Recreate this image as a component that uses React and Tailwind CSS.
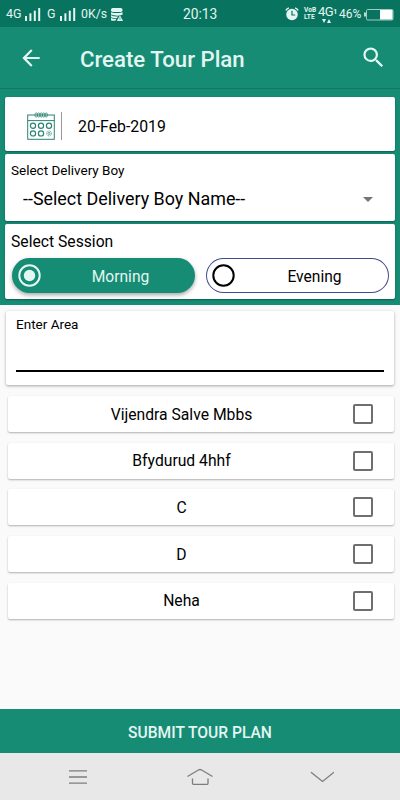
import { useState } from "react";
import { MdArrowBack, MdSearch, MdArrowDropDown } from "react-icons/md";

const areas = ["Vijendra Salve Mbbs", "Bfydurud 4hhf", "C", "D", "Neha"];

const Signal = () => (
  <svg className="w-4 h-[13px] shrink-0" viewBox="0 0 16 13" fill="currentColor">
    <rect x="0" y="8" width="2" height="5" />
    <rect x="4.4" y="5.3" width="2" height="7.7" />
    <rect x="8.8" y="2.7" width="2" height="10.3" />
    <rect x="13.2" y="0" width="2" height="13" />
  </svg>
);

const DataIcon = () => (
  <svg className="w-3 h-[13px] shrink-0" viewBox="0 0 12 13" fill="currentColor">
    <rect x="0" y="0" width="11.5" height="4" rx="1.8" />
    <path d="M0 4.2Q5 6 11.5 4.2V6.8L8 7.6Q3 7.8 0 6.6z" />
    <path d="M0 7.2Q3 8.6 7 8.4L5.8 10.2Q2 10.2 0 9.2z" />
    <path d="M0 10Q2 11 5.2 11L4.4 12.8H1Q0 12.6 0 12z" />
    <path d="M9 7.2L12 13H5.8z" />
    <path d="M9 9.2v2.6" stroke="#08735f" strokeWidth="0.6" />
  </svg>
);

const AlarmIcon = () => (
  <svg className="w-[14px] h-[14px] shrink-0" viewBox="0 0 14 14" fill="none">
    <circle cx="7" cy="7.5" r="5.8" fill="currentColor" />
    <path d="M0.8 3.6Q1.6 1.5 3.9 0.8M13.2 3.6Q12.4 1.5 10.1 0.8" stroke="currentColor" strokeWidth="1.4" />
    <path d="M7 3.8V8h3.2" stroke="#08735f" strokeWidth="1.2" />
  </svg>
);

const Battery = () => (
  <svg className="w-[30px] h-[13px] shrink-0" viewBox="0 0 30 13" fill="none">
    <rect x="2.5" y="1.5" width="26.5" height="10.5" rx="1.2" stroke="#9fcdc2" strokeWidth="1" />
    <rect x="0" y="4.5" width="2" height="4" fill="#b9dcd3" />
    <rect x="16" y="2" width="12.5" height="9.5" fill="#fff" />
  </svg>
);

const CalendarIcon = () => (
  <svg className="w-7 h-7 shrink-0" viewBox="0 0 28 28" fill="none" stroke="#2b8471">
    <rect x="0.7" y="3" width="26.6" height="24.3" strokeWidth="1" />
    <path d="M0.5 8.6h27" strokeWidth="1" />
    {[9.2, 11.7, 14.2, 16.7, 19.2].map((x) => (
      <ellipse key={x} cx={x} cy="3" rx="1.3" ry="2.1" strokeWidth="0.8" />
    ))}
    <g strokeWidth="1.2">
      <circle cx="6" cy="13.8" r="2.6" />
      <circle cx="14" cy="13.8" r="2.6" />
      <circle cx="22" cy="13.8" r="2.6" />
      <circle cx="6" cy="21.4" r="2.6" />
      <circle cx="14" cy="21.4" r="2.6" />
    </g>
    <circle cx="22" cy="21.4" r="2.5" strokeWidth="0.7" strokeDasharray="1.2 0.6" />
    <circle cx="22" cy="21.4" r="1.1" strokeWidth="0.7" />
  </svg>
);

const StatusBar = () => (
  <div className="h-[27px] pt-px bg-[#08735f] flex items-center text-[#e3f6f1] text-[12px] leading-[26px] pl-[6px] pr-[6px]">
    <span className="w-[19px] text-[12.5px]">4G</span>
    <Signal />
    <span className="w-[13px] ml-[6px] text-[12.5px]">G</span>
    <Signal />
    <span className="w-[30px] ml-[5px] whitespace-nowrap text-[12.3px]">0K/s</span>
    <DataIcon />
    <span className="ml-[60px] w-[102px] text-[13.8px]">20:13</span>
    <AlarmIcon />
    <div className="ml-[5px] w-[13px] text-[6.6px] font-bold leading-[7px]">
      <p>VoB</p>
      <p>LTE</p>
    </div>
    <div className="relative ml-px w-5 h-[17px] leading-[12px] whitespace-nowrap flex">
      <span className="text-[13px] tracking-[-0.5px]">4G</span>
      <span className="text-[7px] font-bold">1</span>
      <svg className="absolute left-[4px] bottom-[0px] w-[9px] h-1" viewBox="0 0 9 4" fill="currentColor">
        <path d="M0 0h4L2 4zM5 4h4L7 0z" />
      </svg>
    </div>
    <span className="ml-px w-[25px] whitespace-nowrap text-[12px]">46%</span>
    <Battery />
  </div>
);

const SessionButton = ({ label, active, onClick }) => (
  <button
    onClick={onClick}
    className={
      active
        ? "w-[183px] h-[35px] rounded-full flex items-center pl-[6px] bg-[#168c75] text-[#e3f6f1] shadow-[0_2px_4px_rgba(0,0,0,0.35)]"
        : "w-[183px] h-[35px] rounded-full flex items-center pl-[6px] bg-white text-black shadow-[inset_0_0_0_1px_#3f4d8f]"
    }
  >
    <svg className="w-[23px] h-[23px]" viewBox="0 0 23 23" fill="none">
      <circle cx="11.5" cy="11.5" r="10.2" stroke="currentColor" strokeWidth="2" />
      {active && <circle cx="11.5" cy="11.5" r="5.7" fill="currentColor" />}
    </svg>
    <span className="ml-[7px] w-[146px] pt-[2px] text-center text-[15.6px] leading-5">{label}</span>
  </button>
);

const AreaRow = ({ name }) => (
  <div className="h-9 bg-white rounded-[2px] flex items-center shadow-[0_1px_2px_rgba(0,0,0,0.3)]">
    <span className="w-[345px] pl-[2px] pt-px text-center text-[15.7px] leading-5">{name}</span>
    <span className="w-5 h-5 border-2 border-[#6f6f6f] rounded-[2px]" />
  </div>
);

const App = () => {
  const [session, setSession] = useState("Morning");

  return (
    <div className="w-[400px] h-[800px] flex flex-col overflow-hidden bg-[#fafafa] text-black font-['Roboto',sans-serif]">
      <StatusBar />

      <div className="h-[62px] bg-[#168c75] text-[#e3f6f1] flex items-center border-b border-[#107863]">
        <MdArrowBack className="ml-[18px] w-[26px] h-[26px]" />
        <h1 className="ml-9 w-[280px] text-[22.2px] leading-[28px] font-medium pt-[3px]">Create Tour Plan</h1>
        <MdSearch className="w-[27px] h-[27px] mb-px" />
      </div>

      <div className="h-[216px] bg-[#168c75] px-[5px] pt-2 flex flex-col gap-[3px]">
        <div className="h-[54px] bg-white rounded-[2px] flex items-center pt-[3px] pl-[22px] shadow-[0_1px_2px_rgba(0,0,0,0.35)]">
          <CalendarIcon />
          <span className="ml-[6px] w-px h-7 bg-[#999999]" />
          <span className="ml-4 pt-[3px] text-[15.8px] leading-5">20-Feb-2019</span>
        </div>

        <div className="h-[67px] bg-white rounded-[2px] shadow-[0_1px_2px_rgba(0,0,0,0.35)]">
          <p className="pl-[6px] pt-[8px] text-[13.5px] leading-4">Select Delivery Boy</p>
          <div className="flex items-center justify-between pl-[18px] pr-[15px] pt-[9px]">
            <span className="text-[17.9px] leading-6">--Select Delivery Boy Name--</span>
            <MdArrowDropDown className="w-6 h-6 text-[#757575]" />
          </div>
        </div>

        <div className="h-[75px] bg-white rounded-[2px] shadow-[0_1px_2px_rgba(0,0,0,0.35)]">
          <p className="pl-[6px] pt-[8px] text-[15.7px] leading-5">Select Session</p>
          <div className="flex gap-[11px] pl-[6.5px] pt-[6px]">
            {["Morning", "Evening"].map((s) => (
              <SessionButton key={s} label={s} active={session === s} onClick={() => setSession(s)} />
            ))}
          </div>
        </div>
      </div>

      <div className="mt-[6px] ml-[6px] mr-[6px] h-[74px] bg-white rounded-[2px] px-[10px] pt-[5px] shadow-[0_1px_3px_rgba(0,0,0,0.35)]">
        <p className="text-[13.5px] leading-4">Enter Area</p>
        <div className="h-[40px] border-b-2 border-black" />
      </div>

      <div className="mt-[11px] ml-2 mr-[6px] flex flex-col gap-[10.7px]">
        {areas.map((a) => (
          <AreaRow key={a} name={a} />
        ))}
      </div>

      <button className="mt-auto h-11 shrink-0 bg-[#168c75] text-[#e3f6f1] text-[15.6px] font-medium leading-5 pt-[3px]">
        SUBMIT TOUR PLAN
      </button>

      <div className="h-[47px] shrink-0 bg-[#e8e8e8] flex items-center pl-[68px] text-[#7d7d7d]">
        <svg className="w-5 h-4" viewBox="0 0 20 16" fill="none" stroke="currentColor" strokeWidth="1.3">
          <path d="M1 1.8h18M1 8h18M1 14.2h18" />
        </svg>
        <svg className="ml-[98px] w-7 h-[18px]" viewBox="0 0 28 18" fill="none" stroke="currentColor" strokeWidth="1.3">
          <path d="M1.5 8.5L12.8 1.8Q14 1.2 15.2 1.8L26.5 8.5M6.5 10.5V15.5Q6.5 16.3 7.3 16.3H21.2Q22 16.3 22 15.5V10.5" />
        </svg>
        <svg className="ml-[96px] w-6 h-3" viewBox="0 0 24 12" fill="none" stroke="currentColor" strokeWidth="1.3">
          <path d="M1 1.2L12.5 10.5L24 1.2" />
        </svg>
      </div>
    </div>
  );
};

export default App;
